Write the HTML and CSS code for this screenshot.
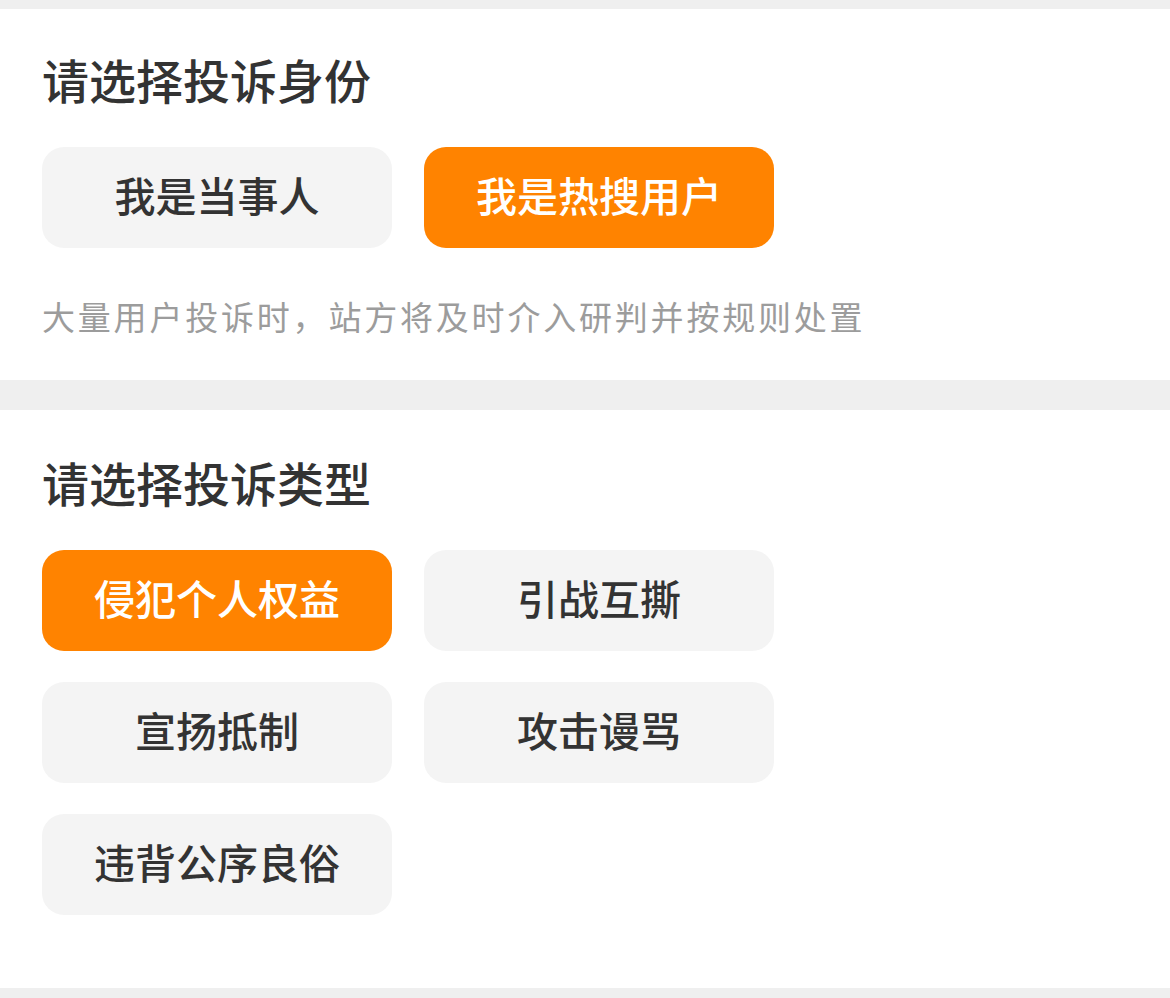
FILE: index.html
```html
<!DOCTYPE html>
<html lang="zh-CN">
<head>
<meta charset="utf-8">
<title>投诉</title>
<link rel="stylesheet" href="styles.css">
</head>
<body>
<div class="page">
  <section class="panel panel-identity">
    <h2 class="panel-title">请选择投诉身份</h2>
    <div class="options">
      <button class="option">我是当事人</button>
      <button class="option is-active">我是热搜用户</button>
    </div>
    <p class="hint">大量用户投诉时，站方将及时介入研判并按规则处置</p>
  </section>
  <section class="panel panel-type">
    <h2 class="panel-title">请选择投诉类型</h2>
    <div class="options">
      <button class="option is-active">侵犯个人权益</button>
      <button class="option">引战互撕</button>
      <button class="option">宣扬抵制</button>
      <button class="option">攻击谩骂</button>
      <button class="option">违背公序良俗</button>
    </div>
  </section>
</div>
</body>
</html>
```

FILE: styles.css
```css
* {
  box-sizing: border-box;
}

html, body {
  margin: 0;
  padding: 0;
  background: #efefef;
}

body {
  font-family: "Noto Sans CJK SC", "Noto Sans", sans-serif;
  color: #333333;
}

.page {
  display: flex;
  flex-direction: column;
  gap: 30px;
  padding: 9px 0 11px;
}

.panel {
  background: #ffffff;
  padding: 46px 42px 47px;
}

.panel-type {
  padding-top: 48px;
  padding-bottom: 73px;
}

.panel-title {
  margin: 0 0 45px;
  font-size: 47px;
  line-height: 47px;
  font-weight: 500;
  color: #333333;
}

.options {
  display: grid;
  grid-template-columns: repeat(2, 350px);
  column-gap: 32px;
  row-gap: 31px;
}

.option {
  height: 101px;
  border: none;
  border-radius: 22px;
  background: #f4f4f4;
  color: #333333;
  font-family: inherit;
  font-size: 41px;
  font-weight: 500;
  display: flex;
  align-items: center;
  justify-content: center;
  padding: 0 0 7px;
}

.option.is-active {
  background: #ff8300;
  color: #ffffff;
}

.hint {
  margin: 52px 0 0;
  font-size: 33px;
  line-height: 33px;
  letter-spacing: 2.8px;
  color: #9c9c9c;
}
```
